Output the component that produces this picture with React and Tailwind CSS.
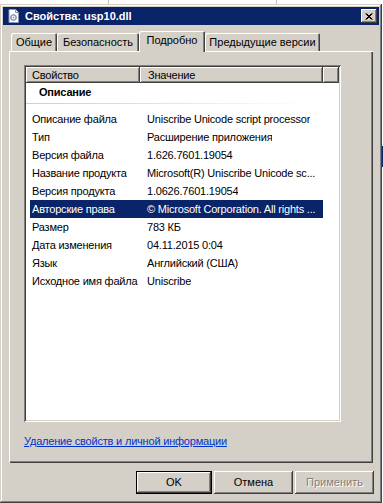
import React from "react";

const rows = [
  ["Описание файла", "Uniscribe Unicode script processor"],
  ["Тип", "Расширение приложения"],
  ["Версия файла", "1.626.7601.19054"],
  ["Название продукта", "Microsoft(R) Uniscribe Unicode sc..."],
  ["Версия продукта", "1.0626.7601.19054"],
  ["Авторские права", "© Microsoft Corporation. All rights ..."],
  ["Размер", "783 КБ"],
  ["Дата изменения", "04.11.2015 0:04"],
  ["Язык", "Английский (США)"],
  ["Исходное имя файла", "Uniscribe"],
];

const raised =
  "shadow-[inset_-1px_-1px_0_#404040,inset_1px_1px_0_#fff,inset_-2px_-2px_0_#808080]";

const TitleIcon = () => (
  <svg width="14" height="14" viewBox="0 0 14 14" className="shrink-0">
    <path d="M2 0.5h6.5l3 3v10h-9.5z" fill="#fff" stroke="#8a96b0" />
    <path d="M8.5 0.5v3h3" fill="#dfe4ee" stroke="#8a96b0" />
    <circle cx="6.5" cy="8.5" r="2.6" fill="none" stroke="#7d9cc8" strokeWidth="1.4" />
    <circle cx="6.5" cy="8.5" r="0.9" fill="#7d9cc8" />
    <path d="M6.5 4.8v1.2M6.5 11v1.2M2.8 8.5h1.2M9 8.5h1.2" stroke="#7d9cc8" />
  </svg>
);

const Tab = ({ label, width, selected }) => (
  <div
    className={
      "flex items-center justify-center rounded-t-[2px] bg-[#d4d0c8] shadow-[inset_1px_1px_0_#fff,inset_-1px_0_0_#404040,inset_-2px_0_0_#808080] " +
      (selected ? "relative z-10 -mb-px h-[21px] pb-[2px]" : "h-[18px]")
    }
    style={{ width }}
  >
    {label}
  </div>
);

const Button = ({ children, isDefault, disabled, width }) => (
  <div
    className={
      "flex h-[23px] items-center justify-center bg-[#d4d0c8] " +
      (isDefault
        ? "shadow-[inset_0_0_0_1px_#000,inset_-2px_-2px_0_#404040,inset_2px_2px_0_#fff,inset_-3px_-3px_0_#808080]"
        : raised) +
      (disabled ? " text-[#808080] [text-shadow:1px_1px_0_#fff]" : " text-black")
    }
    style={{ width }}
  >
    {children}
  </div>
);

export default function App() {
  return (
    <div
      className="relative flex h-[503px] w-[383px] overflow-hidden bg-white text-[11px] leading-[13px] text-black"
      style={{ fontFamily: '"Liberation Sans", Arial, sans-serif' }}
    >
      <div className="absolute left-[108px] top-0 h-[4px] w-px bg-[#c0c0c0]" />
      <div className="absolute left-[276px] top-0 h-[4px] w-px bg-[#c0c0c0]" />
      <div className="absolute right-0 top-[146px] h-[21px] w-[1px] bg-[#0a246a]" />

      <div className="mt-[4px] flex h-[499px] w-[382px] flex-col bg-[#d4d0c8] p-[3px] shadow-[inset_-1px_-1px_0_#404040,inset_1px_1px_0_#d4d0c8,inset_-2px_-2px_0_#808080,inset_2px_2px_0_#fff]">
        {/* title bar */}
        <div className="flex h-[18px] items-center bg-[#0a246a] pl-[4px] pr-[2px]">
          <TitleIcon />
          <span className="ml-[4px] text-[11px] font-bold text-white">Свойства: usp10.dll</span>
          <div
            className={
              "ml-auto flex h-[14px] w-[16px] items-center justify-center bg-[#d4d0c8] " + raised
            }
          >
            <svg width="8" height="7" viewBox="0 0 8 7">
              <path d="M0.5 0.5l6 6M6.5 0.5l-6 6M1.5 0.5l6 6M7.5 0.5l-6 6" stroke="#000" />
            </svg>
          </div>
        </div>

        {/* tabs */}
        <div className="mt-[6px] flex h-[20px] items-end pl-[8px]">
          <Tab label="Общие" width={46} />
          <Tab label="Безопасность" width={82} />
          <Tab label="Подробно" width={66} selected />
          <Tab label="Предыдущие версии" width={115} />
        </div>

        {/* panel */}
        <div className="ml-[6px] flex h-[412px] w-[364px] flex-col pl-[15px] pt-[14px] tracking-[-0.2px] shadow-[inset_1px_1px_0_#fff,inset_-1px_-1px_0_#404040,inset_-2px_-2px_0_#808080]">
          <div className="flex h-[357px] w-[317px] flex-col bg-white p-[2px] shadow-[inset_1px_1px_0_#808080,inset_-1px_-1px_0_#fff,inset_2px_2px_0_#404040,inset_-2px_-2px_0_#d4d0c8]">
            <div className="flex h-[16px] shrink-0">
              <div className={"flex w-[114px] items-center bg-[#d4d0c8] pl-[6px] " + raised}>Свойство</div>
              <div className={"flex w-[183px] items-center bg-[#d4d0c8] pl-[8px] " + raised}>Значение</div>
              <div className={"flex-1 bg-[#d4d0c8] " + raised} />
            </div>
            <div className="flex h-[18px] items-center pl-[13px] font-bold">Описание</div>
            <div className="mt-[2px] h-px w-[280px] bg-linear-to-r from-[#c3d0e6] via-[#dde5f2] to-white" />
            <div className="mt-[6px] flex flex-col">
              {rows.map(([k, v]) => {
                const sel = k === "Авторские права";
                return (
                  <div
                    key={k}
                    className={
                      "ml-[4px] flex h-[18px] w-[293px] items-center whitespace-nowrap " +
                      (sel ? "bg-[#0a246a] text-white" : "")
                    }
                  >
                    <div className="w-[110px] shrink-0 overflow-hidden pl-[2px]">{k}</div>
                    <div className="overflow-hidden pl-[7px]">{v}</div>
                  </div>
                );
              })}
            </div>
          </div>
          <div className="mt-[13px]">
            <span className="text-[#0033cc] underline">Удаление свойств и личной информации</span>
          </div>
        </div>

        {/* buttons */}
        <div className="mt-[8px] flex justify-end gap-[2px] pr-[5px]">
          <Button isDefault width={76}>OK</Button>
          <Button width={79}>Отмена</Button>
          <Button disabled width={79}>Применить</Button>
        </div>
      </div>
    </div>
  );
}
